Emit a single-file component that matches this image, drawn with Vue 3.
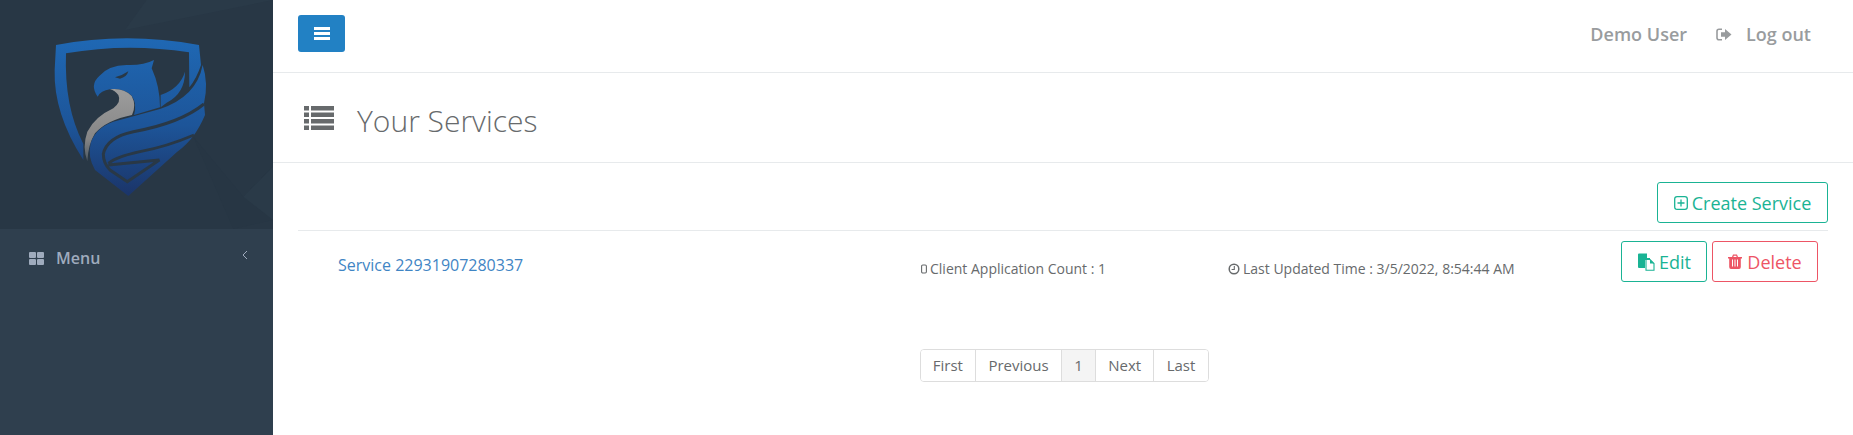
<script setup>
const pages = [
  { label: 'First' },
  { label: 'Previous' },
  { label: '1', active: true },
  { label: 'Next' },
  { label: 'Last' }
]
</script>

<template>
  <div class="layout">
    <aside class="sidebar">
      <div class="brand">
        <svg class="logo" viewBox="0 0 819 687" width="273" height="229" role="img" aria-label="Logo">
          <defs>
            <linearGradient id="blue" x1="0" y1="113" x2="0" y2="590" gradientUnits="userSpaceOnUse">
              <stop offset="0" stop-color="#1f68b4" />
              <stop offset="0.55" stop-color="#1d5599" />
              <stop offset="1" stop-color="#1b3468" />
            </linearGradient>
            <linearGradient id="grey" x1="0" y1="270" x2="0" y2="480" gradientUnits="userSpaceOnUse">
              <stop offset="0" stop-color="#9c9c9c" />
              <stop offset="0.7" stop-color="#868686" />
              <stop offset="1" stop-color="#4e5a64" />
            </linearGradient>
          </defs>
          <path d="M440 0L375 90L819 0Z" fill="#2a3a48" />
          <path d="M580 410L730 590L819 500L819 660L700 687Z" fill="#273644" />
          <path d="M730 590L819 500L819 660Z" fill="#2a3a48" />
          <path fill="url(#blue)" fill-rule="evenodd" d="M168 135Q380 95 597 135L603 195Q590 235 568 262L567 157Q380 128 198 160Q192 320 250 432L250 480Q160 340 164 210Z" />
          <path fill="url(#blue)" d="M293 290Q268 255 298 228Q325 196 380 195Q430 197 462 180L455 205Q480 260 480 322L402 345Q412 310 395 287Q370 263 330 268Q302 272 293 290Z" />
          <path fill="#293846" d="M345 232Q368 226 385 214Q380 232 360 236Z" />
          <path fill="url(#blue)" d="M482 285Q540 265 555 215Q555 280 500 308L482 322Z" />
          <path fill="url(#grey)" d="M330 268Q370 263 395 288Q410 315 396 345Q320 360 285 400Q265 432 262 484Q246 440 262 395Q285 350 340 325Q365 305 355 285Q345 272 330 268Z" />
          <path fill="url(#blue)" d="M608 195Q626 250 612 310L615 345Q600 380 582 405Q560 435 530 457L385 588L285 510Q262 470 272 430Q285 385 340 365L480 327Q590 290 608 195Z" />
          <path fill="none" stroke="#293846" stroke-width="9" d="M612 312Q540 370 400 395Q320 412 310 462Q310 490 330 510L382 545L478 480L325 495" />
          <path fill="none" stroke="#293846" stroke-width="8" d="M582 405Q500 440 420 455Q350 470 325 490" />
        </svg>
      </div>
      <nav class="side-nav">
        <a class="side-link">
          <svg class="menu-icon" viewBox="0 0 15 13" width="15" height="13" aria-hidden="true">
            <rect x="0" y="0" width="7" height="6" rx="1" />
            <rect x="8" y="0" width="7" height="6" rx="1" />
            <rect x="0" y="7" width="7" height="6" rx="1" />
            <rect x="8" y="7" width="7" height="6" rx="1" />
          </svg>
          <span class="menu-label">Menu</span>
          <svg class="chevron" viewBox="0 0 6 10" width="6" height="10" aria-hidden="true">
            <path d="M5 1L1 5L5 9" />
          </svg>
        </a>
      </nav>
    </aside>

    <main class="main">
      <header class="topbar">
        <button class="toggle" aria-label="Toggle menu">
          <svg viewBox="0 0 16 13" width="16" height="13" aria-hidden="true">
            <rect y="0" width="16" height="3" />
            <rect y="5" width="16" height="3" />
            <rect y="10" width="16" height="3" />
          </svg>
        </button>
        <div class="top-right">
          <span class="user">Demo User</span>
          <a class="logout">
            <svg viewBox="0 0 16 13" width="16" height="13" aria-hidden="true">
              <path class="lo-frame" d="M6 1.2H3Q1 1.2 1 3.2V9.8Q1 11.8 3 11.8H6" />
              <path d="M5 4.3H9V1L15.5 6.5L9 12V8.7H5Z" />
            </svg>
            <span>Log out</span>
          </a>
        </div>
      </header>

      <section class="page-title">
        <svg viewBox="0 0 30 24" width="30" height="24" aria-hidden="true">
          <rect x="0" y="0" width="5" height="4.5" />
          <rect x="7" y="0" width="23" height="4.5" />
          <rect x="0" y="6.5" width="5" height="4.5" />
          <rect x="7" y="6.5" width="23" height="4.5" />
          <rect x="0" y="13" width="5" height="4.5" />
          <rect x="7" y="13" width="23" height="4.5" />
          <rect x="0" y="19.5" width="5" height="4.5" />
          <rect x="7" y="19.5" width="23" height="4.5" />
        </svg>
        <h1>Your Services</h1>
      </section>

      <section class="content">
        <div class="actions">
          <button class="btn green create">
            <svg viewBox="0 0 14 14" width="14" height="14" aria-hidden="true">
              <rect class="ln" x="0.7" y="0.7" width="12.6" height="12.6" rx="2.4" />
              <path class="ln" d="M7 3.5V10.5M3.5 7H10.5" />
            </svg>
            Create Service
          </button>
        </div>

        <div class="service-row">
          <a class="service-name">Service 22931907280337</a>
          <span class="meta count">
            <svg viewBox="0 0 6 10" width="6" height="10" aria-hidden="true">
              <rect class="ln-meta" x="0.6" y="1" width="4.8" height="8" rx="1.2" />
            </svg>
            Client Application Count : 1
          </span>
          <span class="meta updated">
            <svg viewBox="0 0 12 12" width="12" height="12" aria-hidden="true">
              <circle class="ln-meta thick" cx="6" cy="6" r="4.8" />
              <path class="ln-meta" d="M6.3 3V6.5H3.6" />
            </svg>
            Last Updated Time : 3/5/2022, 8:54:44 AM
          </span>
          <div class="row-buttons">
            <button class="btn green edit">
              <svg viewBox="0 0 18 18" width="18" height="18" aria-hidden="true">
                <path class="fill-g" d="M1 1.5Q1 0.5 2 0.5H10V5H13V7H8V15H2Q1 15 1 14Z" />
                <path class="ln-g" d="M9 6.5H13L17 10.5V17.2H9Z" />
                <path class="fill-g" d="M13 6.5V10.5H17Z" />
              </svg>
              Edit
            </button>
            <button class="btn red delete">
              <svg viewBox="0 0 14 15" width="14" height="15" aria-hidden="true">
                <path d="M0 3H14V4.5H12.8V13Q12.8 15 11 15H3Q1.2 15 1.2 13V4.5H0ZM4 5.5V12.5H5V5.5ZM6.5 5.5V12.5H7.5V5.5ZM9 5.5V12.5H10V5.5Z" fill-rule="evenodd" />
                <path d="M4 3L5 0.6H9L10 3H8.6L8.2 1.8H5.8L5.4 3Z" />
              </svg>
              Delete
            </button>
          </div>
        </div>

        <nav class="pager" aria-label="Pagination">
          <a v-for="p in pages" :key="p.label" class="page" :class="{ active: p.active }">{{ p.label }}</a>
        </nav>
      </section>
    </main>
  </div>
</template>

<style>
html, body { margin: 0; background: #fff; }
</style>

<style scoped>
.layout {
  display: flex;
  width: 1853px;
  height: 435px;
  overflow: hidden;
  font-family: "Open Sans", "Liberation Sans", sans-serif;
  color: #676a6c;
  background: #fff;
}
.sidebar {
  flex: 0 0 273px;
  display: flex;
  flex-direction: column;
  background: #2f3f4e;
}
.brand { height: 229px; background: #283745; }
.logo { display: block; }
.side-link {
  display: flex;
  align-items: center;
  height: 58px;
  padding: 0 25px 0 29px;
  color: #9fabbd;
  font-size: 16px;
  font-weight: 600;
}
.menu-icon { fill: #9fabbd; flex: none; }
.menu-label { margin-left: 12px; flex: 1; }
.chevron { fill: none; stroke: #9fabbd; stroke-width: 1; margin-top: -6px; }

.main { flex: 1; min-width: 0; }
.topbar {
  display: flex;
  justify-content: space-between;
  padding: 15px 25px 0 25px;
  height: 57px;
  border-bottom: 1px solid #e7eaec;
}
.toggle {
  width: 47px;
  height: 37px;
  padding: 0;
  border: 0;
  border-radius: 3px;
  background: #2281c4;
  display: flex;
  align-items: center;
  justify-content: center;
}
.toggle svg { fill: #fff; }
.top-right {
  display: flex;
  align-items: center;
  height: 38px;
  padding-right: 17px;
  color: #999c9e;
  font-size: 18px;
  font-weight: 600;
}
.logout { display: flex; align-items: center; margin-left: 29px; }
.logout span { margin-left: 14px; }
.logout svg { fill: #999c9e; }
.lo-frame { fill: none; stroke: #999c9e; stroke-width: 1.6; }

.page-title {
  display: flex;
  align-items: center;
  height: 89px;
  padding-left: 31px;
  border-bottom: 1px solid #e7eaec;
}
.page-title svg { fill: #676a6c; flex: none; }
.page-title h1 {
  margin: 5px 0 0 23px;
  font-size: 30px;
  font-weight: 300;
  color: #676a6c;
}

.content { padding: 19px 25px 0; }
.actions {
  display: flex;
  justify-content: flex-end;
  padding-bottom: 7px;
  border-bottom: 1px solid #e7eaec;
}
.btn {
  display: inline-flex;
  align-items: center;
  justify-content: center;
  height: 41px;
  padding: 0;
  background: #fff;
  border: 1px solid;
  border-radius: 3px;
  font-family: inherit;
  font-size: 18px;
}
.green { color: #1ab394; border-color: #1ab394; }
.red { color: #ed5565; border-color: #ed5565; }
.create { width: 171px; gap: 4px; }
.edit { width: 86px; gap: 4px; }
.delete { width: 106px; gap: 5px; }
.ln { fill: none; stroke: #1ab394; stroke-width: 1.3; }
.fill-g { fill: #1ab394; }
.ln-g { fill: #fff; stroke: #1ab394; stroke-width: 1.1; }
.delete svg { fill: #ed5565; }

.service-row {
  display: grid;
  grid-template-columns: 583px 307px 1fr auto;
  align-items: start;
  padding: 10px 10px 0 40px;
}
.service-name {
  color: #3f85c4;
  font-size: 16px;
  line-height: 20px;
  margin-top: 14px;
}
.meta {
  display: inline-flex;
  align-items: center;
  gap: 3px;
  margin-top: 18px;
  font-size: 14px;
  line-height: 20px;
  color: #676a6c;
}
.ln-meta { fill: none; stroke: #676a6c; stroke-width: 1.1; }
.thick { stroke-width: 1.5; }
.row-buttons { display: flex; gap: 5px; }

.pager {
  display: flex;
  width: max-content;
  margin: 67px 0 0 621.5px;
  border: 1px solid #ddd;
  border-radius: 4px;
  overflow: hidden;
}
.page {
  padding: 0 12.25px;
  height: 31px;
  line-height: 31px;
  font-size: 15px;
  color: #676a6c;
  border-left: 1px solid #ddd;
  background: #fff;
}
.page:first-child { border-left: 0; }
.page.active { background: #f4f4f4; }
</style>
